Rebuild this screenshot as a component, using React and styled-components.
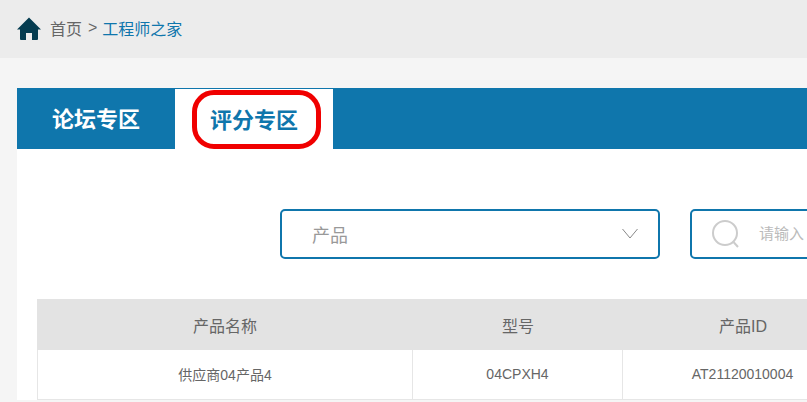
import React from "react";
import styled, { createGlobalStyle } from "styled-components";

const GlobalStyle = createGlobalStyle`
  html, body {
    margin: 0;
    padding: 0;
    background: #f5f5f5;
    overflow: hidden;
  }
  body {
    font-family: "Liberation Sans", "Noto Sans CJK SC", sans-serif;
  }
`;

const Page = styled.div`
  width: 807px;
  height: 402px;
  overflow: hidden;
`;

const Breadcrumb = styled.div`
  height: 58px;
  background: #ececec;
  display: flex;
  align-items: center;
  padding: 0 0 3px 17px;
  box-sizing: border-box;
  font-size: 16px;
  color: #666;
`;

const HomeIcon = styled.svg`
  width: 24px;
  height: 24px;
  margin: 3px 9px 0 0;
  fill: #053c50;
`;

const Crumb = styled.span`
  color: ${(p) => (p.$active ? "#0f76ac" : "#666")};
  margin-left: ${(p) => (p.$active ? "5px" : "0")};
`;

const Arrow = styled.span`
  margin-left: 6px;
`;

const Card = styled.div`
  margin: 30px 0 0 17px;
  width: 900px;
  background: #fff;
`;

const TabBar = styled.div`
  height: 61px;
  background: #0f76ac;
  display: flex;
  position: relative;
`;

const Tab = styled.div`
  width: 158px;
  display: flex;
  align-items: center;
  justify-content: center;
  padding-bottom: 3px;
  font-size: 22px;
  font-weight: 700;
  box-sizing: border-box;
  color: ${(p) => (p.$active ? "#0f76ac" : "#fff")};
  background: ${(p) => (p.$active ? "#fff" : "transparent")};
  border-top: ${(p) => (p.$active ? "1px solid #0f76ac" : "none")};
`;

const Highlight = styled.div`
  position: absolute;
  left: 175px;
  top: 2px;
  width: 129px;
  height: 59px;
  box-sizing: border-box;
  border: 5px solid #f00000;
  border-radius: 22px;
`;

const Filters = styled.div`
  display: flex;
  gap: 30px;
  padding: 60px 0 0 263px;
`;

const SelectBox = styled.div`
  flex: none;
  width: 380px;
  height: 50px;
  box-sizing: border-box;
  border: 2px solid #0f76ac;
  border-radius: 5px;
  display: flex;
  align-items: center;
  justify-content: space-between;
  padding: 0 20px 0 30px;
  font-size: 18px;
  color: #999;
`;

const SearchBox = styled.div`
  flex: none;
  width: 380px;
  height: 50px;
  box-sizing: border-box;
  border: 2px solid #0f76ac;
  border-radius: 5px;
  display: flex;
  align-items: center;
  padding: 0 0 3px 19px;
  font-size: 15px;
  color: #bbb;
`;

const SearchIcon = styled.svg`
  width: 30px;
  height: 30px;
  margin: 3px 18px 0 0;
  fill: none;
  stroke: #ccc;
  stroke-width: 2;
`;

const Chevron = styled.svg`
  width: 16px;
  height: 11px;
  margin-bottom: 2px;
  fill: none;
  stroke: #888;
  stroke-width: 1;
`;

const Table = styled.div`
  margin: 40px 0 0 20px;
  width: 860px;
`;

const Row = styled.div`
  display: grid;
  grid-template-columns: 376px 210px 240px;
  height: ${(p) => (p.$head ? "51px" : "50px")};
  background: ${(p) => (p.$head ? "#e3e3e3" : "#fff")};
  border-bottom: ${(p) => (p.$head ? "none" : "1px solid #e6e6e6")};
  box-sizing: border-box;
`;

const Cell = styled.div`
  display: flex;
  align-items: center;
  justify-content: center;
  padding-bottom: ${(p) => (p.$head ? "0" : "2px")};
  font-size: ${(p) => (p.$head ? "16px" : "14px")};
  color: #666;
  box-sizing: border-box;
  border-right: ${(p) => (p.$head ? "none" : "1px solid #e6e6e6")};
  border-left: ${(p) => (p.$first && !p.$head ? "1px solid #e6e6e6" : "none")};
`;

export default function App() {
  return (
    <Page>
      <GlobalStyle />
      <Breadcrumb>
        <HomeIcon viewBox="0 0 24 24">
          <path d="M12 0.5 L24 12.5 L21 12.5 L21 22 Q21 23 20 23 L15 23 L15 16 L9 16 L9 23 L4 23 Q3 23 3 22 L3 12.5 L0 12.5 Z" />
        </HomeIcon>
        <Crumb>首页</Crumb>
        <Arrow>&gt;</Arrow>
        <Crumb $active>工程师之家</Crumb>
      </Breadcrumb>
      <Card>
        <TabBar>
          <Tab>论坛专区</Tab>
          <Tab $active>评分专区</Tab>
          <Highlight />
        </TabBar>
        <Filters>
          <SelectBox>
            产品
            <Chevron viewBox="0 0 16 11">
              <path d="M0.5 1 L8 10 L15.5 1" />
            </Chevron>
          </SelectBox>
          <SearchBox>
            <SearchIcon viewBox="0 0 30 30">
              <circle cx="14" cy="14" r="12" />
              <path d="M22.5 23 L27 28" />
            </SearchIcon>
            请输入
          </SearchBox>
        </Filters>
        <Table>
          <Row $head>
            <Cell $head>产品名称</Cell>
            <Cell $head>型号</Cell>
            <Cell $head>产品ID</Cell>
          </Row>
          <Row>
            <Cell $first>供应商04产品4</Cell>
            <Cell>04CPXH4</Cell>
            <Cell>AT21120010004</Cell>
          </Row>
        </Table>
      </Card>
    </Page>
  );
}
